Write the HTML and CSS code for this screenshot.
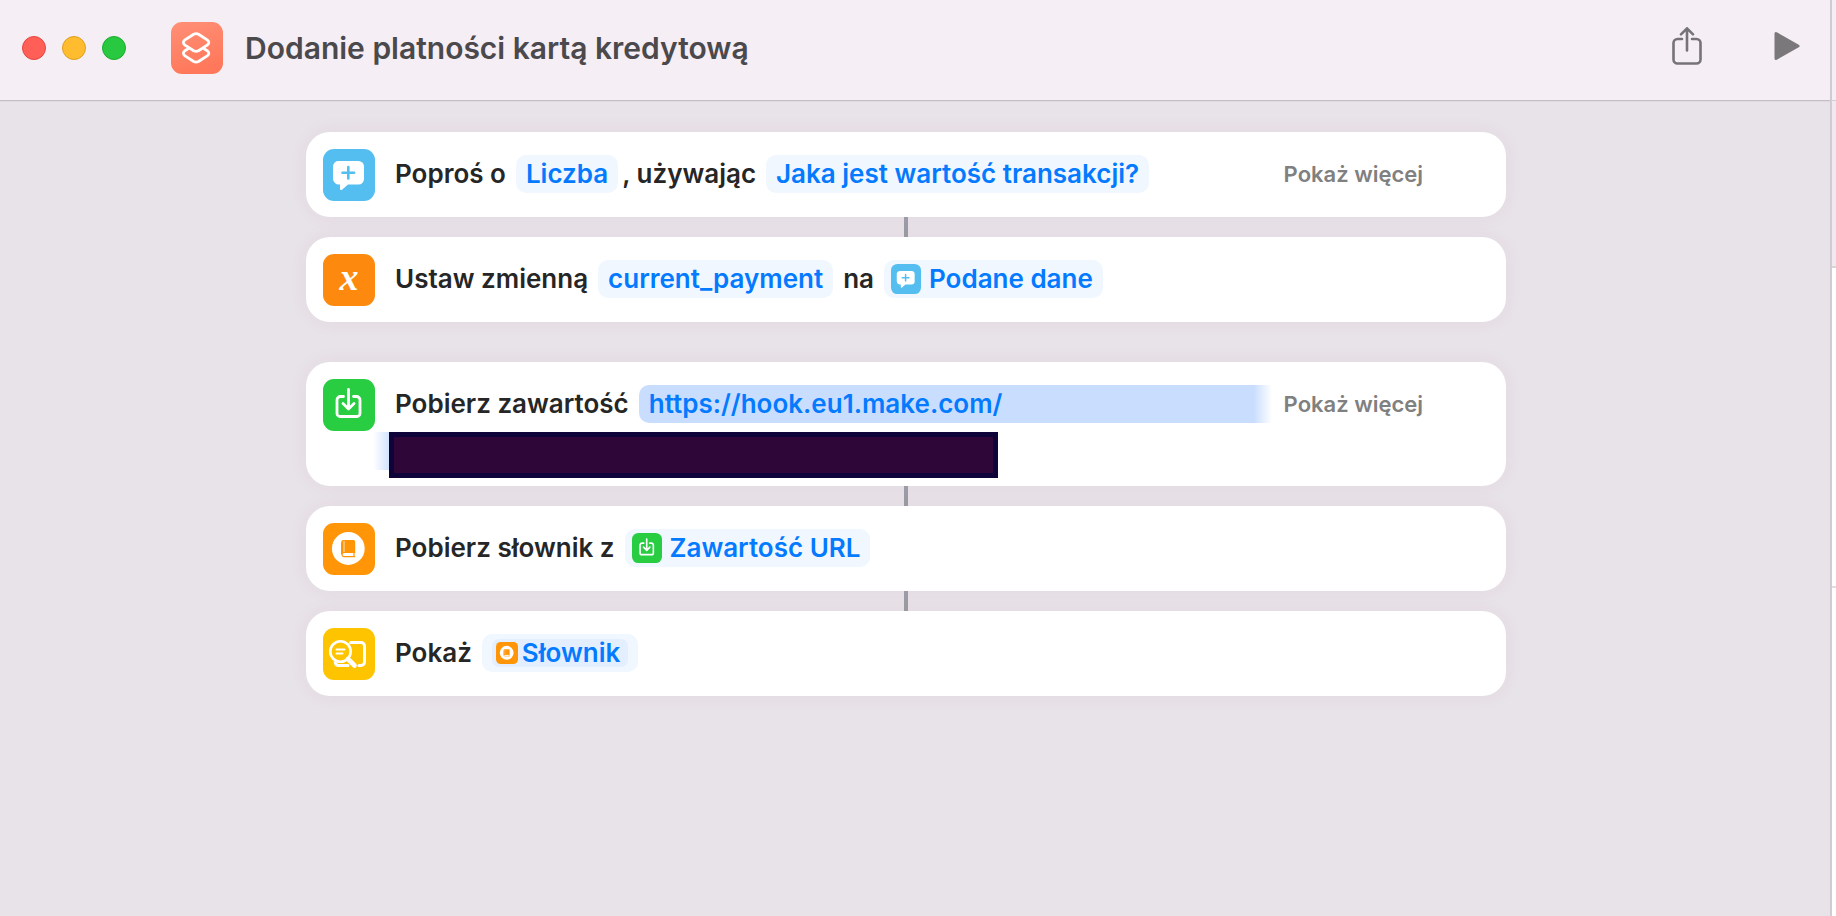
FILE: index.html
```html
<!DOCTYPE html>
<html lang="pl">
<head>
    <meta charset="UTF-8">
    <meta name="viewport" content="width=device-width, initial-scale=1.0">
    <title>Dodanie platności kartą kredytową</title>
    <link rel="stylesheet" href="styles.css">
</head>
<body>
    <!-- Shared icons -->
    <svg class="sprite" aria-hidden="true">
        <symbol id="icon-ask" viewBox="0 0 52 52">
            <rect width="52" height="52" rx="11" fill="#55bef0"/>
            <path d="M16 12h19.500a5.500 5.500 0 0 1 5.500 5.500v12.500a5.500 5.500 0 0 1-5.500 5.500h-10.500l-6 5.200c-1 .8-2 .3-2-1v-4.200h-1a6 6 0 0 1-6-5.500v-12.500a5.500 5.500 0 0 1 6-5.500z" fill="#fff"/>
            <path d="M25.300 18v11.500M19.500 23.700h11.600" stroke="#55bef0" stroke-width="2.600" stroke-linecap="round"/>
        </symbol>
        <symbol id="icon-url" viewBox="0 0 52 52">
            <rect width="52" height="52" rx="11" fill="#28cd41"/>
            <path d="M20.500 17.500h-3a3.500 3.500 0 0 0-3.500 3.500v13.500a3 3 0 0 0 3 3h17a3 3 0 0 0 3-3v-13.500a3.500 3.500 0 0 0-3.500-3.500h-3M25.500 10.500v18.500M20 24.500l5.500 5.500 5.500-5.500" fill="none" stroke="#fff" stroke-width="2.800" stroke-linecap="round" stroke-linejoin="round"/>
        </symbol>
        <symbol id="icon-dictionary" viewBox="0 0 52 52">
            <rect width="52" height="52" rx="11" fill="#ff9507"/>
            <circle cx="25.300" cy="25.500" r="16.400" fill="#fff"/>
            <path d="M20.500 17h10a1.700 1.700 0 0 1 1.700 1.700v11.300h-12a2 2 0 0 0-2 2v-12.800a2.200 2.200 0 0 1 2.300-2.200z" fill="#ff9507"/>
            <path d="M21 18v11.500" stroke="#fff" stroke-width=".8"/>
            <path d="M32.200 29.500h-11.500a2.100 2.100 0 0 0 0 4.100h11.500M31 30v3.500M18.700 19.500v12" fill="none" stroke="#ff9507" stroke-width="1.200"/>
        </symbol>
    </svg>

    <div class="window">
        <main class="editor">
            <header class="toolbar">
                <div class="lights">
                    <button class="light red" aria-label="Zamknij"></button>
                    <button class="light yellow" aria-label="Minimalizuj"></button>
                    <button class="light green" aria-label="Pełny ekran"></button>
                </div>
                <svg class="icon" viewBox="0 0 52 52" aria-hidden="true">
                    <defs>
                        <linearGradient id="coral" x1="0" y1="0" x2=".3" y2="1">
                            <stop offset="0" stop-color="#ff9076"/>
                            <stop offset="1" stop-color="#ff785b"/>
                        </linearGradient>
                    </defs>
                    <rect width="52" height="52" rx="11" fill="url(#coral)"/>
                    <g fill="none" stroke="#fff" stroke-width="2.800" stroke-linejoin="round" stroke-linecap="round">
                        <path d="M22.700 12.300q2.400-1.300 4.800 0l8.700 5.600q3.200 2.600 0 5.200l-8.700 5.600q-2.400 1.300-4.800 0l-8.700-5.600q-3.200-2.600 0-5.200z"/>
                        <path d="M17.600 26.400l-3.600 2.300q-3.200 2.500 0 5.100l8.700 5.700q2.400 1.300 4.800 0l8.700-5.700q3.200-2.600 0-5.100l-3.600-2.300"/>
                    </g>
                </svg>
                <h1>Dodanie platności kartą kredytową</h1>
                <button class="tool" aria-label="Udostępnij">
                    <svg width="30" height="38" viewBox="0 0 30 38">
                        <path d="M10 12h-4.500a4 4 0 0 0-4 4v16.500a4 4 0 0 0 4 4h19a4 4 0 0 0 4-4v-16.500a4 4 0 0 0-4-4h-4.500M15 1.500v22M9 7.300l6-6 6 6" fill="none" stroke="#767377" stroke-width="2.600" stroke-linecap="round" stroke-linejoin="round"/>
                    </svg>
                </button>
                <button class="tool" aria-label="Uruchom">
                    <svg width="26" height="30" viewBox="0 0 26 30">
                        <path d="M2 2.500v25l22-12.500z" fill="#7a787b" stroke="#7a787b" stroke-width="3" stroke-linejoin="round"/>
                    </svg>
                </button>
            </header>

            <div class="workflow">
                <section class="action">
                    <svg class="icon" aria-hidden="true"><use href="#icon-ask"/></svg>
                    <div class="summary">
                        <div class="line">
                            <span>Poproś o</span>
                            <button class="token">Liczba</button>
                            <span class="comma">, używając</span>
                            <button class="token">Jaka jest wartość transakcji?</button>
                        </div>
                    </div>
                    <button class="more">Pokaż więcej</button>
                </section>
                <div class="connector"></div>
                <section class="action">
                    <svg class="icon" viewBox="0 0 52 52" aria-hidden="true">
                        <rect width="52" height="52" rx="11" fill="#fd8a0e"/>
                        <text class="variable" x="26" y="36" text-anchor="middle">x</text>
                    </svg>
                    <div class="summary">
                        <div class="line">
                            <span>Ustaw zmienną</span>
                            <button class="token">current_payment</button>
                            <span>na</span>
                            <button class="token with-icon">
                                <svg class="mini" aria-hidden="true"><use href="#icon-ask"/></svg>
                                Podane dane
                            </button>
                        </div>
                    </div>
                </section>

                <section class="action separate">
                    <svg class="icon" aria-hidden="true"><use href="#icon-url"/></svg>
                    <div class="summary">
                        <div class="line">
                            <span>Pobierz zawartość</span>
                            <button class="token selected">https://hook.eu1.make.com/</button>
                        </div>
                        <div class="continuation">
                            <span class="fade"></span>
                            <span class="redacted"></span>
                        </div>
                    </div>
                    <button class="more">Pokaż więcej</button>
                </section>
                <div class="connector"></div>
                <section class="action">
                    <svg class="icon" aria-hidden="true"><use href="#icon-dictionary"/></svg>
                    <div class="summary">
                        <div class="line">
                            <span>Pobierz słownik z</span>
                            <button class="token with-icon">
                                <svg class="mini" aria-hidden="true"><use href="#icon-url"/></svg>
                                Zawartość URL
                            </button>
                        </div>
                    </div>
                </section>
                <div class="connector"></div>
                <section class="action">
                    <svg class="icon" viewBox="0 0 52 52" aria-hidden="true">
                        <rect width="52" height="52" rx="11" fill="#ffc400"/>
                        <g fill="none" stroke="#fff" stroke-linecap="round" stroke-linejoin="round">
                            <path d="M27.500 14.500h10.500a3.500 3.500 0 0 1 3.500 3.500v16a3.500 3.500 0 0 1-3.500 3.500h-2M25 37.500h-9.500a3.500 3.500 0 0 1-3.300-3" stroke-width="3"/>
                            <circle cx="17.500" cy="23.500" r="10.200" stroke-width="2.600"/>
                            <path d="M13.500 21.500h8M13.500 25.500h6" stroke-width="2"/>
                            <path d="M25 31l6.500 6.500" stroke-width="4.600"/>
                        </g>
                    </svg>
                    <div class="summary">
                        <div class="line">
                            <span>Pokaż</span>
                            <button class="token">
                                <span class="inner-token">
                                    <svg class="tiny" aria-hidden="true"><use href="#icon-dictionary"/></svg>
                                    Słownik
                                </span>
                            </button>
                        </div>
                    </div>
                </section>
            </div>
        </main>

        <aside class="sidebar">
            <div class="side-toolbar"></div>
            <div class="side-search"></div>
            <div class="side-list"></div>
        </aside>
    </div>
</body>
</html>
```
FILE: styles.css
```css
* {
    box-sizing: border-box;
}

body {
    margin: 0;
    font-family: Inter, "Liberation Sans", sans-serif;
    font-size: 26px;
    font-weight: 600;
    color: #262626;
    background: #e8e3e9;
}

button {
    margin: 0;
    padding: 0;
    border: none;
    background: none;
    font: inherit;
    color: inherit;
    cursor: pointer;
}

svg {
    display: block;
    flex-shrink: 0;
}

.sprite {
    position: absolute;
    width: 0;
    height: 0;
}

.window {
    display: flex;
    min-height: 100vh;
}

.editor {
    flex: 1;
    min-width: 0;
}

/* Toolbar */
.toolbar {
    display: flex;
    align-items: center;
    padding: 22px 30px 26px 22px;
    background: #f5eef5;
    border-bottom: 1px solid #c3bec5;
    box-shadow: 0 1px 0 #dfdae0;
}

.lights {
    display: flex;
    gap: 16px;
    margin-right: 45px;
}

.light {
    width: 24px;
    height: 24px;
    border-radius: 50%;
    border: 1px solid;
}

.red {
    background: #ff5f57;
    border-color: #e2463f;
}

.yellow {
    background: #febc2e;
    border-color: #dfa023;
}

.green {
    background: #28c840;
    border-color: #1dad2c;
}

.icon {
    width: 52px;
    height: 52px;
}

h1 {
    flex: 1;
    margin: 0 0 0 22px;
    font-size: 30px;
    line-height: 36px;
    font-weight: 600;
    color: #4b494c;
}

.tool {
    margin-left: 72px;
    padding-bottom: 4px;
}

/* Actions */
.workflow {
    max-width: 1218px;
    margin: 0 auto;
    padding: 31px 18px 40px 0;
}

.action {
    display: flex;
    align-items: flex-start;
    padding: 17px 83px 16px 17px;
    background: #fff;
    border-radius: 24px;
    box-shadow: 0 0 20px rgba(120, 60, 60, 0.05);
}

.separate {
    margin-top: 40px;
}

.connector {
    width: 4px;
    height: 20px;
    margin: 0 auto;
    background: #9b9ca5;
}

.summary {
    flex: 1;
    min-width: 0;
    padding: 6px 12px 0 20px;
}

.line {
    display: flex;
    align-items: center;
    gap: 10px;
    line-height: 38px;
    white-space: nowrap;
}

.comma {
    margin-left: -6px;
}

.token {
    height: 38px;
    padding: 0 10px;
    border-radius: 10px;
    background: #f0f7ff;
    color: #047aff;
    line-height: 38px;
}

.with-icon {
    display: flex;
    align-items: center;
    gap: 8px;
    padding-left: 7px;
}

.mini {
    width: 30px;
    height: 30px;
}

.tiny {
    width: 22px;
    height: 22px;
}

.inner-token {
    display: flex;
    align-items: center;
    gap: 4px;
    height: 28px;
    padding: 0 8px 0 4px;
    border-radius: 7px;
    background: #e3efff;
}

.selected {
    flex: 1;
    text-align: left;
    border-radius: 10px 0 0 10px;
    background: linear-gradient(to left, #fff, #c9deff 18px);
}

.continuation {
    display: flex;
    margin: 9px 0 0 -22px;
    height: 38px;
}

.fade {
    width: 16px;
    background: linear-gradient(to right, #fff, #d3e4ff);
}

.redacted {
    width: 609px;
    height: 46px;
    border: 5px solid #0f0439;
    background: #2f0638;
}

.more {
    padding-top: 6px;
    font-size: 22px;
    line-height: 38px;
    color: #808080;
    white-space: nowrap;
}

.variable {
    font: italic bold 38px "Liberation Serif", serif;
    fill: #fff;
}

/* Edge of the actions library */
.sidebar {
    display: flex;
    flex-direction: column;
    width: 6px;
    border-left: 2px solid #cfcbd1;
    background: #fff;
}

.side-toolbar {
    height: 101px;
    background: #f5eef5;
    border-bottom: 1px solid #d3ced4;
}

.side-search {
    height: 167px;
    background: #f0e9f0;
    border-bottom: 2px solid #d8d4d8;
}

.side-list {
    height: 320px;
    border-bottom: 2px solid #e0dee0;
}
```
